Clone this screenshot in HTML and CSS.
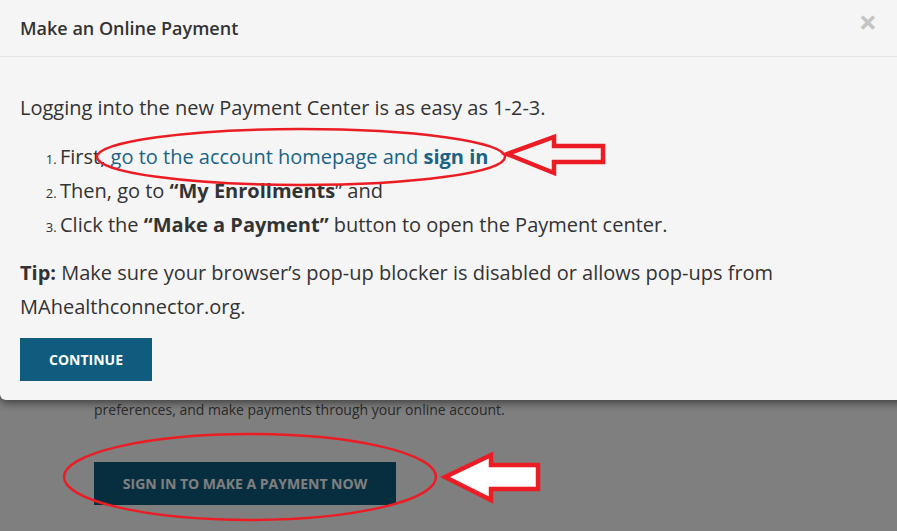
FILE: index.html
```html
<!DOCTYPE html>
<html lang="en">
<head>
  <meta charset="UTF-8">
  <title>Make an Online Payment</title>
  <link rel="stylesheet" href="styles.css">
</head>
<body>
  <div class="page">
    <p class="page-text">View your notices, update your contact preferences, and check your eligibility. You can also<br>preferences, and make payments through your online account.</p>
    <a class="page-button" href="#">Sign in to make a payment now</a>
  </div>

  <div class="backdrop"></div>

  <div class="modal">
    <div class="modal-header">
      <h4 class="modal-title">Make an Online Payment</h4>
      <span class="close">&times;</span>
    </div>
    <div class="modal-body">
      <p>Logging into the new Payment Center is as easy as 1-2-3.</p>
      <ol class="steps">
        <li>First, <a href="#">go to the account homepage and <strong>sign in</strong></a></li>
        <li>Then, go to <strong>“My Enrollments</strong>” and</li>
        <li>Click the <strong>“Make a Payment”</strong> button to open the Payment center.</li>
      </ol>
      <p><strong>Tip:</strong> Make sure your browser’s pop-up blocker is disabled or allows pop-ups from MAhealthconnector.org.</p>
      <button type="button" class="btn-continue">Continue</button>
    </div>
  </div>

  <!-- red annotations drawn on top of the screenshot -->
  <svg class="marks" width="897" height="531" viewBox="0 0 897 531">
    <ellipse cx="301" cy="157" rx="204" ry="28" fill="none" stroke="#ec1c24" stroke-width="2.5"/>
    <polygon points="507,154 554,137 554,146 603,146 603,162 554,162 554,173" fill="#f5f5f5" stroke="#ec1c24" stroke-width="4.5" stroke-linejoin="miter"/>
    <ellipse cx="250" cy="477" rx="186" ry="43" fill="none" stroke="#ec1c24" stroke-width="2.5"/>
    <polygon points="445,477 491,455 491,465 538,465 538,489 491,489 491,500" fill="#fff" stroke="#ec1c24" stroke-width="4.5" stroke-linejoin="miter"/>
  </svg>
</body>
</html>
```

FILE: styles.css
```css
/* General Styling */
body {
  margin: 0;
  font-family: 'Open Sans', sans-serif;
  background: #fff;
  color: #333;
  overflow: hidden;
  height: 531px;
  position: relative;
}

/* Page behind the dialog */
.page {
  padding: 378px 0 0 94px;
}

.page-text {
  margin: 0;
  font-size: 14px;
  line-height: 21px;
  color: #555;
}

.page-button {
  display: inline-block;
  margin-top: 42px;
  width: 302px;
  height: 43px;
  line-height: 43px;
  text-align: center;
  background: #0f5c7e;
  color: #fff;
  font-size: 14px;
  font-weight: bold;
  text-transform: uppercase;
  text-decoration: none;
}

.backdrop {
  position: absolute;
  inset: 0;
  background: rgba(0, 0, 0, 0.5);
}

/* Dialog */
.modal {
  position: absolute;
  top: -6px;
  left: 0;
  width: 912px;
  background: #f5f5f5;
  border-radius: 6px;
  box-shadow: 0 3px 9px rgba(0, 0, 0, 0.5);
}

.modal-header {
  display: flex;
  align-items: center;
  justify-content: space-between;
  height: 63px;
  padding: 6px 35px 0 20px;
  box-sizing: border-box;
  border-bottom: 1px solid #e5e5e5;
}

.modal-title {
  margin: 0;
  font-size: 18px;
  font-weight: 600;
  color: #333;
}

.close {
  font-size: 32px;
  font-weight: bold;
  color: #c4c4c4;
  line-height: 1;
  margin-top: -12px;
}

.modal-body {
  padding: 34px 20px 19px;
  font-size: 20px;
  line-height: 34px;
}

.modal-body p {
  margin: 0;
}

.steps {
  margin: 15px 0 14px;
  padding-left: 40px;
}

.steps li::marker {
  font-size: 13px;
}

.steps a {
  color: #1a6384;
  text-decoration: none;
}

.btn-continue {
  display: block;
  margin-top: 14px;
  width: 132px;
  height: 43px;
  border: none;
  background: #0f5c7e;
  color: #fff;
  font-family: 'Open Sans', sans-serif;
  font-size: 14px;
  font-weight: bold;
  text-transform: uppercase;
  cursor: pointer;
}

.marks {
  position: absolute;
  top: 0;
  left: 0;
  pointer-events: none;
}
```
